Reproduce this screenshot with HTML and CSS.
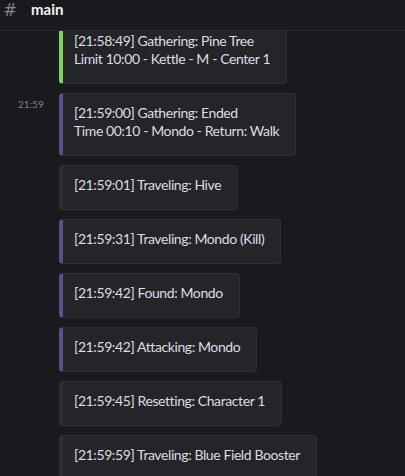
FILE: index.html
```html
<!DOCTYPE html>
<html lang="en">
<head>
    <meta charset="UTF-8">
    <meta name="viewport" content="width=device-width, initial-scale=1.0">
    <title>main</title>
    <link rel="stylesheet" href="styles.css">
</head>
<body>
    <div class="channel-header">
        <span class="hash">#</span>
        <span class="channel-name">main</span>
    </div>

    <div class="messages">
        <div class="message-list">
            <div class="message">
                <div class="gutter"></div>
                <div class="embed green">
                    <div>[21:58:49] Gathering: Pine Tree</div>
                    <div>Limit 10:00 - Kettle - M - Center 1</div>
                </div>
            </div>
            <div class="message">
                <div class="gutter"><span class="time">21:59</span></div>
                <div class="embed purple">
                    <div>[21:59:00] Gathering: Ended</div>
                    <div>Time 00:10 - Mondo - Return: Walk</div>
                </div>
            </div>
            <div class="message">
                <div class="gutter"></div>
                <div class="embed">
                    <div>[21:59:01] Traveling: Hive</div>
                </div>
            </div>
            <div class="message">
                <div class="gutter"></div>
                <div class="embed purple">
                    <div>[21:59:31] Traveling: Mondo (Kill)</div>
                </div>
            </div>
            <div class="message">
                <div class="gutter"></div>
                <div class="embed purple">
                    <div>[21:59:42] Found: Mondo</div>
                </div>
            </div>
            <div class="message">
                <div class="gutter"></div>
                <div class="embed purple">
                    <div>[21:59:42] Attacking: Mondo</div>
                </div>
            </div>
            <div class="message">
                <div class="gutter"></div>
                <div class="embed">
                    <div>[21:59:45] Resetting: Character 1</div>
                </div>
            </div>
            <div class="message">
                <div class="gutter"></div>
                <div class="embed">
                    <div>[21:59:59] Traveling: Blue Field Booster</div>
                </div>
            </div>
        </div>
    </div>
</body>
</html>
```

FILE: styles.css
```css
body {
    background-color: #1a1a1e;
    color: #dbdee1;
    font-family: Lato, "Noto Sans", sans-serif;
    margin: 0;
    height: 100vh;
    overflow: hidden;
    display: flex;
    flex-direction: column;
}
.channel-header {
    height: 31px;
    flex-shrink: 0;
    display: flex;
    align-items: flex-start;
    box-sizing: border-box;
    border-bottom: 1px solid #2b2b31;
    background: #1a1a1e;
}
.hash {
    color: #80848e;
    font-size: 17px;
    line-height: 20px;
    width: 19px;
    margin-left: 3px;
    font-family: "DejaVu Sans", sans-serif;
}
.channel-name {
    color: #f2f3f5;
    font-weight: 700;
    font-size: 15px;
    line-height: 18px;
    margin-left: 9px;
}
.messages {
    flex: 1;
    overflow: hidden;
}
.message-list {
    margin-top: -10px;
    display: flex;
    flex-direction: column;
    gap: 9px;
}
.message {
    display: flex;
    align-items: flex-start;
}
.gutter {
    width: 59px;
    flex-shrink: 0;
}
.time {
    display: block;
    padding: 5px 0 0 18px;
    font-size: 10px;
    line-height: 12px;
    color: #80848e;
}
.embed {
    background: #242429;
    border: 1px solid #2e2e34;
    border-left: 4px solid #2e2e34;
    border-radius: 4px;
    padding: 10px 16px 15px 11px;
    font-size: 14px;
    line-height: 18px;
    letter-spacing: -0.4px;
    white-space: nowrap;
}
.embed.green {
    border-left-color: #7ed35a;
}
.embed.purple {
    border-left-color: #5d4f8c;
}
```
